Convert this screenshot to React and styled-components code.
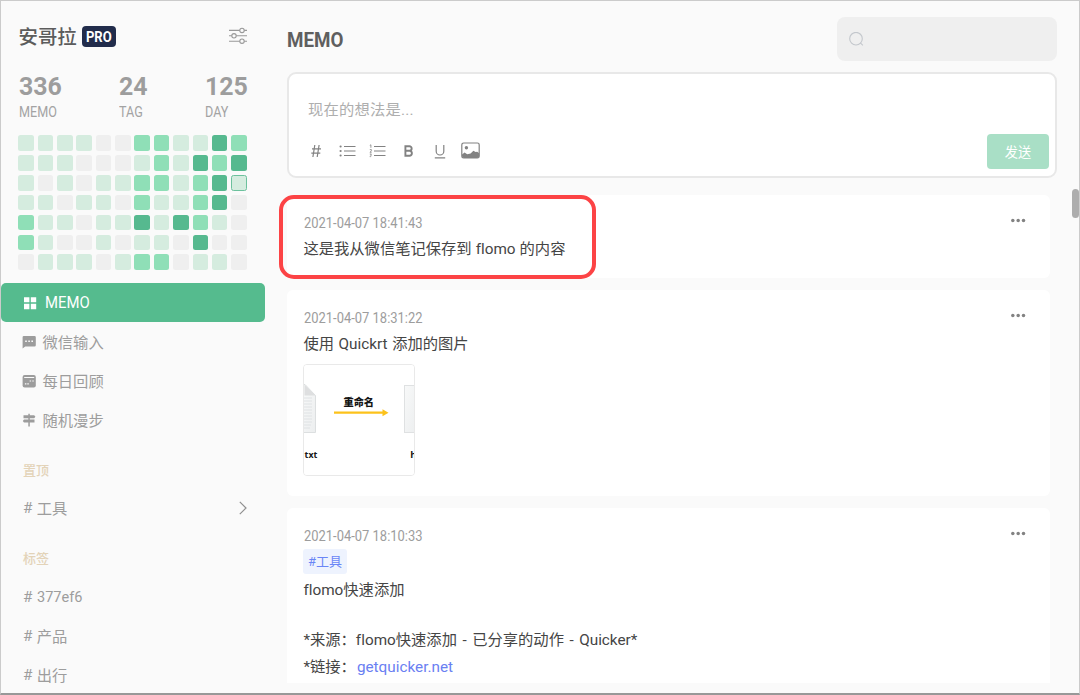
import React from 'react';
import styled, { createGlobalStyle } from 'styled-components';

const Global = createGlobalStyle`
  * { box-sizing: border-box; }
  body {
    margin: 0;
    background: #fafafa;
    font-family: Roboto, "Noto Sans CJK SC", sans-serif;
    font-size: 15.3px;
    font-variant-ligatures: none;
    color: #454545;
  }
`;

const Window = styled.div`
  position: relative;
  display: flex;
  width: 1080px;
  height: 695px;
  overflow: hidden;
  background: #fafafa;
  border: 1px solid #cbcbcb;
  border-bottom: 2px solid #989898;
`;

const Condensed = styled.span`
  display: inline-block;
  transform: scaleX(${(p) => p.$scale || 0.925});
  transform-origin: ${(p) => p.$origin || 'left'} center;
  white-space: nowrap;
`;

/* Sidebar */
const Sidebar = styled.aside`
  flex: none;
  width: 264px;
  height: 692px;
  overflow: hidden;
`;

const Profile = styled.header`
  display: flex;
  align-items: center;
  height: 30px;
  margin-top: 20px;
  padding: 0 18px 0 17.5px;
  svg { margin-top: -1px; }
`;

const UserName = styled.span`
  padding-top: 3px;
  font-size: 19.4px;
  font-weight: 500;
  line-height: 30px;
  color: #5c5c5c;
`;

const ProBadge = styled.span`
  display: flex;
  align-items: center;
  justify-content: center;
  width: 34px;
  height: 21px;
  margin: 0 auto 0 5.5px;
  padding-top: 1px;
  border-radius: 4px;
  background: #212c4b;
  color: #fff;
  font-size: 14px;
  font-weight: 700;
`;

const Stats = styled.div`
  display: grid;
  grid-template-columns: 100px 86px 1fr;
  margin-top: 19px;
  padding-left: 17.5px;
`;

const StatValue = styled.div`
  font-size: 26.5px;
  font-weight: 700;
  line-height: 32px;
  color: #9d9d9d;
`;

const StatLabel = styled.div`
  font-size: 14px;
  line-height: 20px;
  color: #a3a3a3;
`;

const Heatmap = styled.div`
  display: grid;
  grid-template-columns: repeat(12, 15.5px);
  grid-auto-rows: 15.5px;
  column-gap: 3.86px;
  row-gap: 4.35px;
  margin: 13.4px 0 0 17.3px;
`;

const LEVELS = ['#efefef', '#d5ecdf', '#8fdfb7', '#56b98f'];

const Cell = styled.span`
  border-radius: 2.5px;
  background: ${(p) => LEVELS[p.$level]};
  border: ${(p) => (p.$today ? '1px solid #6cc19d' : '0')};
`;

const Nav = styled.nav`
  margin-top: 13.3px;
`;

const NavItem = styled.div`
  display: flex;
  align-items: center;
  height: 39.1px;
  padding-left: ${(p) => (p.$active ? '22px' : '21px')};
  gap: ${(p) => (p.$active ? '8px' : '6.5px')};
  border-radius: 5px;
  font-size: ${(p) => (p.$active ? '16px' : '15.3px')};
  color: ${(p) => (p.$active ? '#fff' : '#9d9d9d')};
  background: ${(p) => (p.$active ? '#55bb8e' : 'transparent')};
  svg { flex: none; }
`;

const ItemLabel = styled.span`
  margin-top: -2px;
`;

const SectionLabel = styled.div`
  margin: ${(p) => p.$top}px 0 ${(p) => p.$bottom}px;
  padding-left: 22px;
  font-size: 13px;
  font-weight: 500;
  line-height: 20px;
  color: #e3d3b8;
`;

const TagItem = styled.div`
  display: flex;
  align-items: center;
  height: 39px;
  padding: 0 18px 0 22px;
  color: #9d9d9d;
  svg { margin-left: auto; }
`;

const Hash = styled.span`
  width: 13.7px;
`;

/* Main column */
const Main = styled.main`
  flex: 1;
  display: flex;
  flex-direction: column;
  height: 692px;
  padding: 16px 22px 10px 22px;
`;

const TopBar = styled.div`
  display: flex;
  justify-content: space-between;
  height: 44px;
`;

const Heading = styled.h1`
  margin: 0;
  font-size: 19.8px;
  font-weight: 700;
  line-height: 48px;
  color: #5f5f5f;
`;

const Search = styled.div`
  display: flex;
  align-items: center;
  width: 220px;
  padding-left: 11.5px;
  border-radius: 8px;
  background: #efefef;
`;

const Editor = styled.section`
  flex: none;
  display: flex;
  flex-direction: column;
  height: 105.5px;
  margin-top: 11px;
  padding: 21px 6px 0 19px;
  border: 2px solid #e8e8e8;
  border-radius: 9px;
  background: #fff;
`;

const Placeholder = styled.div`
  line-height: 30px;
  letter-spacing: 0.2px;
  color: #aeaeae;
`;

const Toolbar = styled.div`
  display: flex;
  align-items: center;
  height: 35px;
  margin-top: 9px;
`;

const ToolButton = styled.span`
  display: flex;
  justify-content: center;
  width: 30.8px;
  margin-top: -2px;
  margin-left: ${(p) => p.$shift || 0}px;
`;

const SendButton = styled.button`
  width: 62px;
  height: 35px;
  margin: 0 0 0 auto;
  padding: 2px 0 0;
  border: 0;
  border-radius: 4px;
  background: #a9dfc6;
  color: #fff;
  font: 13.2px/34px Roboto, "Noto Sans CJK SC", sans-serif;
`;

const MemoList = styled.div`
  flex: 1;
  min-height: 0;
  display: flex;
  flex-direction: column;
  gap: 12px;
  margin-top: 17px;
  margin-right: 7px;
`;

const Card = styled.article`
  position: relative;
  flex: none;
  height: ${(p) => p.$height}px;
  padding: 17px 16px 0;
  border-radius: ${(p) => (p.$cut ? '6px 6px 0 0' : '6px')};
  background: #fff;
`;

const CardHead = styled.div`
  display: flex;
  justify-content: space-between;
  height: 22px;
  padding: 0 8px 0 0.5px;
  font-size: 14px;
  line-height: 22px;
  color: #9d9d9d;
`;

const CardText = styled.p`
  margin: ${(p) => p.$top || 0}px 0 0 0.4px;
  line-height: 27.6px;
  word-spacing: ${(p) => p.$space || 0}px;
  white-space: nowrap;
`;

const TagChip = styled.span`
  display: block;
  width: 44px;
  height: 24.5px;
  margin-top: 2px;
  border-radius: 3px;
  background: #eef3fe;
  color: #6a86f6;
  font-size: 13px;
  line-height: 25px;
  text-align: center;
`;

const Link = styled.a`
  margin-left: 1px;
  color: #6a80f2;
`;

const Thumbnail = styled.div`
  width: 112px;
  height: 112px;
  margin-top: 5px;
  border: 1px solid #e9e9e9;
  border-radius: 4px;
  overflow: hidden;
  svg { display: block; }
`;

const Highlight = styled.div`
  position: absolute;
  left: -8px;
  top: 0.5px;
  width: 317px;
  height: 84px;
  border: 4px solid #fc4345;
  border-radius: 15px;
`;

const ScrollThumb = styled.div`
  position: absolute;
  right: 0;
  top: 188px;
  width: 7px;
  height: 29px;
  border-radius: 3.5px;
  background: #adadad;
`;

/* Icons */
const SettingsIcon = () => (
  <svg width="18" height="18" viewBox="0 0 18 18" fill="none" stroke="#999" strokeWidth="1.1">
    <path d="M0 3.4h10.8M15.2 3.4H18M0 8.8h2.8M7.2 8.8H18M0 14.2h10.8M15.2 14.2H18" />
    <circle cx="13" cy="3.4" r="2.2" />
    <circle cx="5" cy="8.8" r="2.2" />
    <circle cx="13" cy="14.2" r="2.2" />
  </svg>
);

const GridIcon = () => (
  <svg width="14" height="14" viewBox="0 0 14 14" fill="#fff">
    <path d="M1 1.2h5.4v5H1zM7.8 1.2h5.4v5H7.8zM1 7.8h5.4v5.4H1zM7.8 7.8h5.4v5.4H7.8z" />
  </svg>
);

const ChatIcon = () => (
  <svg width="14" height="14" viewBox="0 0 14 14">
    <path d="M2 1h10.5a1.3 1.3 0 0 1 1.3 1.3v8a1.3 1.3 0 0 1-1.3 1.3H3.2L.6 13.6V2.3A1.3 1.3 0 0 1 2 1z" fill="#9c9c9c" />
    <path d="M3.2 5.4h1.6v1.5H3.2zM6.3 5.4h1.6v1.5H6.3zM9.4 5.4H11v1.5H9.4z" fill="#fafafa" />
  </svg>
);

const CalendarIcon = () => (
  <svg width="14" height="14" viewBox="0 0 14 14">
    <rect x="0.6" y="1.1" width="13.2" height="12.4" rx="2" fill="#9c9c9c" />
    <path d="M2.2 3.5h10M7.6 7h1.5M10.3 7h1.5M2.9 9.8h1.5M5.3 9.8h1.5" stroke="#fafafa" strokeWidth="1.2" />
  </svg>
);

const SignpostIcon = () => (
  <svg width="14" height="14" viewBox="0 0 14 14" fill="#9c9c9c">
    <path d="M6.3.8h1.5v1.5h4.4l1.2 1.4-1.2 1.5H7.8v1.3h4.7v3H7.8v4H6.3v-4H2L.8 8 2 6.5h4.3V5.2H1.5V2.3h4.8z" />
  </svg>
);

const ChevronIcon = () => (
  <svg width="8" height="14" viewBox="0 0 8 14" fill="none" stroke="#909090" strokeWidth="1.2">
    <path d="M.8.8 7 7 .8 13.2" />
  </svg>
);

const SearchIcon = () => (
  <svg width="15" height="15" viewBox="0 0 15 15" fill="none" stroke="#c3c7cc" strokeWidth="1.1">
    <circle cx="7" cy="6.7" r="6.3" />
    <path d="m11.4 10.9 2.5 2.4" />
  </svg>
);

const HashIcon = () => (
  <svg width="12" height="14" viewBox="0 0 12 14" fill="none" stroke="#828282" strokeWidth="1.2">
    <path d="M4.8 1 2.9 13M9.1 1 7.2 13M2 4.8h9M1.3 9.1h9" />
  </svg>
);

const BulletListIcon = () => (
  <svg width="17" height="14" viewBox="0 0 17 14" fill="#828282">
    <path d="M5 2h11.5v1H5zM5 6.5h11.5v1H5zM5 11h11.5v1H5z" />
    <circle cx="1.6" cy="2.5" r="1.1" />
    <circle cx="1.6" cy="7" r="1.1" />
    <circle cx="1.6" cy="11.5" r="1.1" />
  </svg>
);

const NumberListIcon = () => (
  <svg width="17" height="14" viewBox="0 0 17 14" fill="none" stroke="#828282">
    <path d="M5 2.5h11.5M5 7h11.5M5 11.5h11.5" />
    <path d="M.8 1.4 1.9.8v3M.8 5.6h1.6v1.2L1 8.3h1.6M.8 10h1.6l-.8 1.2c1.2.1.9 1.7-.9 1.4" strokeWidth=".8" />
  </svg>
);

const BoldIcon = () => (
  <svg width="12" height="14" viewBox="0 0 12 14" fill="none" stroke="#828282" strokeWidth="1.9">
    <path d="M2.4 2.2h4a2.2 2.2 0 0 1 0 4.5h-4zM2.4 6.7h4.4a2.6 2.6 0 0 1 0 5.1H2.4z" />
  </svg>
);

const UnderlineIcon = () => (
  <svg width="12" height="16" viewBox="0 0 12 16" fill="none" stroke="#828282" strokeWidth="1.2">
    <path d="M2.2 2v6.2a3.8 3.8 0 0 0 7.6 0V2M.8 14.8h10.4" />
  </svg>
);

const ImageIcon = () => (
  <svg width="19" height="17" viewBox="0 0 19 17">
    <rect x=".8" y="1" width="17.4" height="15" rx="1.8" fill="none" stroke="#828282" strokeWidth="1.2" />
    <circle cx="5.4" cy="5.8" r="1.7" fill="#828282" />
    <path d="M1 12.4 3.6 10.6l2.6 1.6 3.4-.6 2.8-2.9 2.2 1.4 1.6-.4 2 1.5V14a2 2 0 0 1-2 2H3a2 2 0 0 1-2-2z" fill="#828282" />
  </svg>
);

const MoreIcon = () => (
  <svg width="16" height="18" viewBox="0 0 16 18" fill="#828282">
    <circle cx="2.8" cy="8.4" r="1.75" />
    <circle cx="8.2" cy="8.4" r="1.75" />
    <circle cx="13.5" cy="8.4" r="1.75" />
  </svg>
);

const RenamePicture = () => (
  <svg width="110" height="110" viewBox="0 0 110 110">
    <defs>
      <linearGradient id="paper" x1="0" y1="0" x2="1" y2="1">
        <stop offset="0" stopColor="#f8f9f9" />
        <stop offset="1" stopColor="#eceeef" />
      </linearGradient>
    </defs>
    <rect width="110" height="110" fill="#fff" />
    <path d="M-1 19.5H1L11.5 30.5V67.5H-1z" fill="url(#paper)" stroke="#dcdfe0" />
    <path d="M.5 19.5 11.5 30.5H.5z" fill="#dedfe0" />
    <path d="M0 33h8M0 36h8M0 39h8M0 42h8M0 45h8M0 48h8M0 51h8M0 54h8M0 57h8M0 60h7M0 63h6" stroke="#dfe2e4" />
    <rect x="100.5" y="20.5" width="12" height="47" fill="url(#paper)" stroke="#dfe1e2" />
    <path d="M30 47.7h50" stroke="#fcc21b" strokeWidth="2.3" />
    <path d="M78.5 44.3 84.5 47.7l-6 3.5z" fill="#fcc21b" />
    <text x="39.5" y="41" fontFamily="Noto Sans CJK SC, sans-serif" fontWeight="900" fontSize="10.2" fill="#151515">重命名</text>
    <text x="0.6" y="92.5" fontFamily="Open Sans, sans-serif" fontWeight="700" fontSize="8.8" fill="#151515">txt</text>
    <text x="106.3" y="92.5" fontFamily="Open Sans, sans-serif" fontWeight="700" fontSize="9.6" fill="#151515">h</text>
  </svg>
);

const ACTIVITY = [
  '111100221132',
  '111000121323',
  '101011221231',
  '110110211230',
  '211011313210',
  '210010110300',
  '011101220110',
];

const STATS = [
  ['336', 'MEMO'],
  ['24', 'TAG'],
  ['125', 'DAY'],
];

const MemoHead = ({ time }) => (
  <CardHead>
    <Condensed>{time}</Condensed>
    <MoreIcon />
  </CardHead>
);

export default function App() {
  return (
    <>
      <Global />
      <Window>
        <Sidebar>
          <Profile>
            <UserName>安哥拉</UserName>
            <ProBadge>
              <Condensed $scale={0.93} $origin="center">PRO</Condensed>
            </ProBadge>
            <SettingsIcon />
          </Profile>
          <Stats>
            {STATS.map(([value, label]) => (
              <div key={label}>
                <StatValue><Condensed $scale={0.94}>{value}</Condensed></StatValue>
                <StatLabel><Condensed $scale={0.9}>{label}</Condensed></StatLabel>
              </div>
            ))}
          </Stats>
          <Heatmap>
            {ACTIVITY.flatMap((row, r) =>
              [...row].map((level, c) => (
                <Cell key={`${r}-${c}`} $level={Number(level)} $today={r === 2 && c === 11} />
              ))
            )}
          </Heatmap>
          <Nav>
            <NavItem $active><GridIcon /><Condensed $scale={0.93}>MEMO</Condensed></NavItem>
            <NavItem><ChatIcon /><ItemLabel>微信输入</ItemLabel></NavItem>
            <NavItem><CalendarIcon /><ItemLabel>每日回顾</ItemLabel></NavItem>
            <NavItem><SignpostIcon /><ItemLabel>随机漫步</ItemLabel></NavItem>
          </Nav>
          <SectionLabel $top={21.2} $bottom={8}>置顶</SectionLabel>
          <TagItem><Hash>#</Hash><ItemLabel>工具</ItemLabel><ChevronIcon /></TagItem>
          <SectionLabel $top={21.4} $bottom={8.6}>标签</SectionLabel>
          <TagItem><Hash>#</Hash><Condensed $scale={0.95}>377ef6</Condensed></TagItem>
          <TagItem><Hash>#</Hash><ItemLabel>产品</ItemLabel></TagItem>
          <TagItem><Hash>#</Hash><ItemLabel>出行</ItemLabel></TagItem>
        </Sidebar>
        <Main>
          <TopBar>
            <Heading><Condensed $scale={0.95}>MEMO</Condensed></Heading>
            <Search><SearchIcon /></Search>
          </TopBar>
          <Editor>
            <Placeholder>现在的想法是...</Placeholder>
            <Toolbar>
              <ToolButton $shift={-7}><HashIcon /></ToolButton>
              <ToolButton><BulletListIcon /></ToolButton>
              <ToolButton><NumberListIcon /></ToolButton>
              <ToolButton><BoldIcon /></ToolButton>
              <ToolButton><UnderlineIcon /></ToolButton>
              <ToolButton><ImageIcon /></ToolButton>
              <SendButton>发送</SendButton>
            </Toolbar>
          </Editor>
          <MemoList>
            <Card $height={83.5}>
              <MemoHead time="2021-04-07 18:41:43" />
              <CardText $top={2} $space={0.2}>这是我从微信笔记保存到 flomo 的内容</CardText>
              <Highlight />
            </Card>
            <Card $height={206}>
              <MemoHead time="2021-04-07 18:31:22" />
              <CardText $top={2} $space={0.8}>使用 Quickrt 添加的图片</CardText>
              <Thumbnail><RenamePicture /></Thumbnail>
            </Card>
            <Card $height={175} $cut>
              <MemoHead time="2021-04-07 18:10:33" />
              <TagChip>#工具</TagChip>
              <CardText $top={3.5}>flomo快速添加</CardText>
              <CardText $top={22} $space={1.7}>*来源：flomo快速添加 - 已分享的动作 - Quicker*</CardText>
              <CardText>*链接：<Link>getquicker.net</Link></CardText>
            </Card>
          </MemoList>
        </Main>
        <ScrollThumb />
      </Window>
    </>
  );
}
